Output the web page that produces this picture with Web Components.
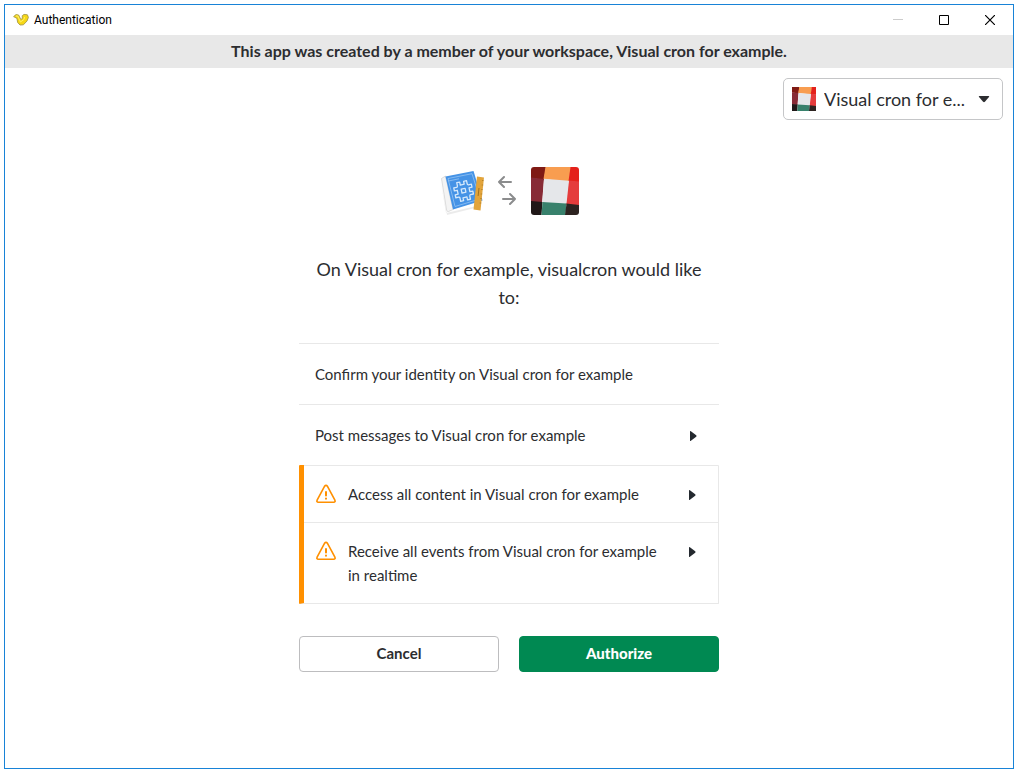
<!DOCTYPE html>
<html lang="en">
<head>
<meta charset="utf-8">
<title>Authentication</title>
<style>
html, body { margin: 0; height: 100%; }
body { box-sizing: border-box; min-height: 100vh; padding: 4px 3px 3px 4px; background: #fff; font: 15px/24px Lato, "Liberation Sans", sans-serif; color: #2c2d30; }
</style>
</head>
<body>
<auth-window>
  <title-bar slot="title">Authentication</title-bar>
  <info-banner slot="banner">This app was created by a member of your workspace, Visual cron for example.</info-banner>
  <team-picker></team-picker>
  <consent-panel>
    <app-link slot="logos"></app-link>
    <span slot="heading">On Visual cron for example, visualcron would like to:</span>
    <scope-row>Confirm your identity on Visual cron for example</scope-row>
    <scope-row expandable>Post messages to Visual cron for example</scope-row>
    <warning-group>
      <scope-row expandable warning>Access all content in Visual cron for example</scope-row>
      <scope-row expandable warning>Receive all events from Visual cron for example in realtime</scope-row>
    </warning-group>
    <action-button slot="actions">Cancel</action-button>
    <action-button slot="actions" primary>Authorize</action-button>
  </consent-panel>
</auth-window>
<script>
const define = (name, html) => {
  const template = document.createElement('template');
  template.innerHTML = html;
  customElements.define(name, class extends HTMLElement {
    constructor() {
      super();
      this.attachShadow({ mode: 'open' }).append(template.content.cloneNode(true));
    }
  });
};

define('auth-window', `
<style>
:host { display: flex; flex-direction: column; box-sizing: border-box; min-height: 100%; border: 1px solid #1883d7; background: #fff; }
main { display: flex; flex-direction: column; padding: 10px; }
</style>
<slot name="title"></slot>
<slot name="banner"></slot>
<main><slot></slot></main>`);

define('title-bar', `
<style>
:host { display: flex; align-items: center; height: 30px; font: 12px/16px Roboto, "Noto Sans", sans-serif; color: #000; }
.logo { margin: 0 5px 0 8px; }
h1 { flex: 1; margin: 0; font: inherit; }
button { display: grid; place-items: center; width: 46px; height: 30px; padding: 0; border: 0; background: none; color: #000; }
button:disabled { color: #ccc; }
svg { display: block; }
</style>
<svg class="logo" width="16" height="14" viewBox="0 0 16 14" aria-hidden="true">
  <path d="M.6 3.6 3 1.6 5.6 2 7.8 6.4 9.4 5.6 9.2 2.8 11 1.4 14.4 1.8 15.4 4.4 14 8 10.4 11.8 7 12 4.6 9.4 4 5.4Z" fill="#f6d716" stroke="#a79a45" stroke-width=".9" stroke-linejoin="round"/>
  <path d="M3 3h1.8L7.4 9l3.4-2.4 1-2.6" fill="none" stroke="#fff06a" stroke-width="1"/>
</svg>
<h1><slot></slot></h1>
<button aria-label="Minimize" disabled><svg width="10" height="10" aria-hidden="true"><path d="M0 4.5h10" stroke="currentColor"/></svg></button>
<button aria-label="Maximize"><svg width="10" height="10" aria-hidden="true"><path d="M.5.5h9v9h-9z" fill="none" stroke="currentColor"/></svg></button>
<button aria-label="Close"><svg width="10" height="10" aria-hidden="true"><path d="m0 0 10 10M10 0 0 10" stroke="currentColor" stroke-width="1.2"/></svg></button>`);

define('info-banner', `
<style>
:host { display: block; padding: 4px 16px 5px; background: #e8e8e8; text-align: center; font-size: 16px; font-weight: 700; }
</style>
<slot></slot>`);

const teamArt = `
  <g transform="scale(.5)">
  <path fill="#7f1a14" d="M0 0h30l-4 26L0 22z"/>
  <path fill="#f89d50" d="M29 0h51l-4 30-51-6z"/>
  <path fill="#e4211b" d="M79 0h17v31l-21-3z"/>
  <path fill="#872b36" d="M0 21l26 3-4 48-22-2z"/>
  <path fill="#e53c3c" d="M75 27l21 2v50l-27-4z"/>
  <path fill="#e5e7ea" d="M26 23.500l50 4-5 46-48-3z"/>
  <path fill="#201818" d="M0 68l23 2-2 26H0z"/>
  <path fill="#38816c" d="M23 70l48 3-2 23H21z"/>
  <path fill="#2d2320" d="M71 73l25 3v20H68z"/></g>`;

define('team-picker', `
<style>
:host { display: flex; align-self: flex-end; align-items: center; box-sizing: border-box; width: 220px; height: 42px; padding: 0 12px 0 8px; border: 1px solid #c5c6c8; border-radius: 5px; }
svg { display: block; flex: none; }
select { flex: 1; min-width: 0; margin: 0; padding: 0 0 0 8px; border: 0; background: none; appearance: none; font: 18px/28px Lato, "Liberation Sans", sans-serif; color: #2c2d30; }
.caret { pointer-events: none; }
</style>
<svg width="24" height="24" viewBox="0 0 48 48" aria-hidden="true">${teamArt}</svg>
<select aria-label="Workspace"><option>Visual cron for e...</option></select>
<svg class="caret" width="12" height="8" aria-hidden="true"><path d="M1.500 1h9q1.200 0 .5.900L6.900 6.800q-.9.900-1.800 0L1 1.900q-.7-.9.500-.9z" fill="#2c2d30"/></svg>`);

define('consent-panel', `
<style>
:host { display: flex; flex-direction: column; align-self: center; width: 100%; max-width: 420px; margin-top: 47px; }
h2 { margin: 40px 0 32px; padding: 0 16px; font-size: 18px; line-height: 28px; font-weight: 400; text-align: center; }
.actions { display: grid; grid-template-columns: 1fr 1fr; gap: 20px; margin-top: 32px; }
</style>
<slot name="logos"></slot>
<h2><slot name="heading"></slot></h2>
<slot></slot>
<div class="actions"><slot name="actions"></slot></div>`);

define('app-link', `
<style>
:host { display: flex; justify-content: center; align-items: center; }
svg { display: block; flex: none; }
.team { border-radius: 3px; }
</style>
<svg width="48" height="48" viewBox="0 0 48 48" aria-hidden="true">
  <path d="M1.500 13 7 46 42 38 40 40 8 48z" fill="#000" opacity=".08"/>
  <path d="M2.500 11.500 6.500 9 14 42.500 9.500 44.500Q8 45 7.600 43z" fill="#f4f4f4" stroke="#d0d0d0" stroke-width=".7"/>
  <path d="M6.500 9.500 34.500 4 43.500 33.500 14 42.500z" fill="#4593e6"/>
  <path d="M9 11.500 33 6.700 41 32 16 39.500zM9.500 14 20 11.800" fill="none" stroke="#9fcaf5" stroke-width=".7"/>
  <g transform="translate(24.500 23.500) rotate(-12)" fill="none" stroke="#d5e9fc" stroke-width="1.300" stroke-linejoin="round">
    <path d="M-5-9h3v3h4v-3h3v3q0 1.500 1 1.500h3v3h-3v4h3v3h-3q-1 0-1 1.500v3h-3v-3h-4v3h-3v-3q0-1.500-1-1.500h-3v-3h3v-4h-3v-3h3q1 0 1-1.500z"/>
    <path d="M-2-1.800h4v4h-4z"/>
  </g>
  <path d="m38 9.500 7 1L41.500 43.500l-7-1z" fill="#e2a43b"/>
  <path d="M43 13.500h1.500M42.700 18h1.500M42.200 22.500h1.500M41.700 27h1.500M41.200 31.500h1.500M40.700 36h1.500" stroke="#9b6b1b" stroke-width=".6"/>
  <path d="m40 21-.9 8" stroke="#9b6b1b" stroke-width=".9"/>
</svg>
<svg width="44" height="48" viewBox="0 0 44 48" aria-hidden="true" fill="none" stroke="#8b8c8d" stroke-width="2" stroke-linecap="round" stroke-linejoin="round">
  <path d="M24 15H12m5-5-5 5 5 5M16 32h12m-5-5 5 5-5 5"/>
</svg>
<svg class="team" width="48" height="48" viewBox="0 0 48 48" aria-hidden="true">${teamArt}</svg>`);

define('warning-group', `
<style>
:host { display: block; border: 1px solid #e8e8e8; border-top: 0; border-left: 5px solid #ff9000; border-radius: 1px; }
</style>
<slot></slot>`);

const rowTemplate = document.createElement('template');
rowTemplate.innerHTML = `
<style>
:host { display: block; border-top: 1px solid #e8e8e8; --pad: 18px 16px; }
:host([warning]) { --pad: 16px 12px; }
.row { display: flex; align-items: flex-start; gap: 12px; box-sizing: border-box; width: 100%; margin: 0; padding: var(--pad); border: 0; background: none; font: inherit; color: inherit; text-align: left; }
.label { flex: 1; padding-right: 10px; }
svg { display: block; flex: none; }
.warn { margin-top: 2px; }
.arrow { margin: 7px 6px 0 0; }
:host([warning]) .arrow { margin-right: 10px; }
</style>`;
customElements.define('scope-row', class extends HTMLElement {
  constructor() {
    super();
    const root = this.attachShadow({ mode: 'open' });
    root.append(rowTemplate.content.cloneNode(true));
    const expandable = this.hasAttribute('expandable');
    const row = document.createElement(expandable ? 'button' : 'div');
    row.className = 'row';
    if (expandable) row.setAttribute('aria-expanded', 'false');
    row.innerHTML = (this.hasAttribute('warning') ? `
      <svg class="warn" width="20" height="20" viewBox="0 0 20 20" fill="none" stroke="#ff9000" stroke-width="1.6" stroke-linejoin="round" stroke-linecap="round" aria-hidden="true">
        <path d="M8.500 2.300Q10 .5 11.500 2.300l7.400 13.900q.8 2-1.200 2H2.300q-2 0-1.200-2z"/>
        <path d="M10 8v3.500M10 14.500v.2" stroke-width="2"/>
      </svg>` : '') + '<span class="label"><slot></slot></span>' + (expandable ? `
      <svg class="arrow" width="8" height="12" aria-hidden="true"><path d="M1 1.500q0-1 .9-.3L7.200 5.300q.8.700 0 1.400l-5.300 4.100q-.9.700-.9-.3z" fill="#24292f"/></svg>` : '');
    root.append(row);
  }
});

define('action-button', `
<style>
:host { display: block; }
button { display: block; box-sizing: border-box; width: 100%; height: 36px; padding: 0 0 2px; border: 1px solid #bdbdbf; border-radius: 4px; background: #fff; color: #2c2d30; font: 700 15px/24px Lato, "Liberation Sans", sans-serif; }
:host([primary]) button { border-color: #008952; background: #008952; color: #fff; font-weight: 900; }
</style>
<button type="button"><slot></slot></button>`);
</script>
</body>
</html>
